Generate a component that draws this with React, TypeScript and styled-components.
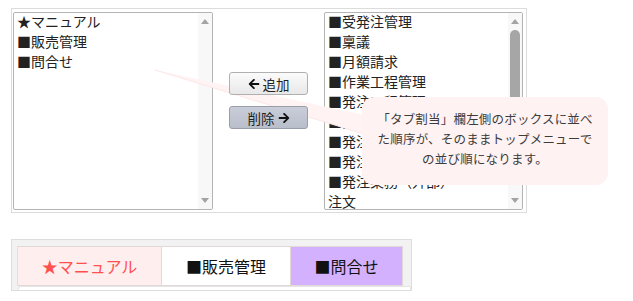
import React from 'react';
import styled, { createGlobalStyle } from 'styled-components';
import { FaArrowLeft, FaArrowRight } from 'react-icons/fa';

const GlobalStyle = createGlobalStyle`
  html, body {
    margin: 0;
    padding: 0;
    background: #fff;
  }
  body {
    font-family: 'Noto Sans CJK JP', 'Noto Sans', sans-serif;
    color: #222;
  }
  * {
    box-sizing: border-box;
  }
`;

const Page = styled.div`
  padding: 8px 0 0 11px;
  display: flex;
  flex-direction: column;
  gap: 26px;
`;

const Picker = styled.div`
  position: relative;
  width: 516px;
  height: 205px;
  padding: 3px 3px 1px 1px;
  border: 1px solid #dcdcdc;
  display: flex;
`;

const ListBox = styled.div<{ $width: number }>`
  width: ${({ $width }) => $width}px;
  height: 198px;
  border: 1px solid #b4b4b4;
  border-radius: 2px;
  background: #fff;
  display: flex;
  overflow: hidden;
`;

const Items = styled.ul`
  flex: 1;
  margin: -2px 0 0;
  padding: 0 0 0 3px;
  list-style: none;
  font-size: 14px;
  line-height: 20px;
  color: #222;
  white-space: nowrap;
  overflow: hidden;
`;

const Item = styled.li`
  height: 20px;
`;

const Scrollbar = styled.div`
  width: 14px;
  background: #f8f8f8;
  display: flex;
  flex-direction: column;
  align-items: center;
  padding: 6px 0 6px;
`;

const Arrow = styled.div<{ $down?: boolean }>`
  width: 0;
  height: 0;
  border-left: 4.5px solid transparent;
  border-right: 4.5px solid transparent;
  ${({ $down }) =>
    $down ? 'border-top: 5px solid #a3a3a3;' : 'border-bottom: 5px solid #a3a3a3;'}
`;

const Track = styled.div`
  flex: 1;
  width: 100%;
  display: flex;
  justify-content: center;
  padding: 6px 0;
`;

const Thumb = styled.div`
  width: 10px;
  height: 100px;
  border-radius: 5px;
  background: #a6a6a6;
`;

const Controls = styled.div`
  width: 111px;
  display: flex;
  flex-direction: column;
  align-items: center;
  padding-top: 60px;
  gap: 11px;
`;

const MoveButton = styled.button<{ $tone: 'add' | 'remove' }>`
  position: relative;
  z-index: 2;
  width: 79px;
  height: 23px;
  padding: 0;
  display: flex;
  align-items: center;
  justify-content: center;
  gap: 3px;
  font-family: inherit;
  font-size: 13.5px;
  color: #222;
  border-radius: 3px;
  border: 1px solid ${({ $tone }) => ($tone === 'add' ? '#b0b0b0' : '#9a9ea8')};
  background: ${({ $tone }) =>
    $tone === 'add'
      ? 'linear-gradient(#fbfbfb, #e8e8e8)'
      : 'linear-gradient(#c9cdd9, #b9becb)'};

  svg {
    width: 12px;
    height: 12px;
    color: #111;
  }
`;

const Bubble = styled.div`
  position: absolute;
  z-index: 3;
  left: 350px;
  top: 88px;
  width: 246px;
  height: 88px;
  padding: 12px 4px;
  border-radius: 12px;
  background: #fff2f2;
  color: #3c3c3c;
  font-size: 12.5px;
  letter-spacing: 0.2px;
  line-height: 20px;
  text-align: center;
`;

const Tail = styled.svg`
  position: absolute;
  z-index: 1;
  left: 0;
  top: 0;
  width: 400px;
  height: 160px;
  pointer-events: none;
  overflow: visible;
`;

const TabFrame = styled.div`
  width: 401px;
  height: 52px;
  border: 1px solid #dddddd;
  background: #f2f2f2;
  padding: 6px 0 0 5px;
  overflow: hidden;
`;

const TabRow = styled.div`
  display: flex;
  height: 40px;
`;

const tabTones = {
  pink: { bg: '#ffeeee', fg: '#ff4f4f' },
  plain: { bg: '#ffffff', fg: '#111' },
  lilac: { bg: '#d3b1ff', fg: '#111' },
};

const Tab = styled.div<{ $tone: keyof typeof tabTones; $width: number }>`
  width: ${({ $width }) => $width}px;
  display: flex;
  align-items: center;
  justify-content: center;
  font-size: 16px;
  border: 1px solid #e2d8d8;
  border-left: none;
  &:first-child {
    border-left: 1px solid #e6dede;
  }
  background: ${({ $tone }) => tabTones[$tone].bg};
  color: ${({ $tone }) => tabTones[$tone].fg};
`;

const TabPanel = styled.div`
  margin-left: 1px;
  height: 20px;
  background: #fff;
  border: 1px solid #e4e4e4;
  border-radius: 3px 0 0 0;
`;

const leftItems = ['★マニュアル', '■販売管理', '■問合せ'];
const rightItems = [
  '■受発注管理',
  '■稟議',
  '■月額請求',
  '■作業工程管理',
  '■発注工程管理',
  '■発注書作成',
  '■発注承認',
  '■発注先管理',
  '■発注業務（外部）',
  '注文',
];

const App = () => {
  return (
    <>
      <GlobalStyle />
      <Page>
        <Picker>
          <ListBox $width={200}>
            <Items>
              {leftItems.map((t) => (
                <Item key={t}>{t}</Item>
              ))}
            </Items>
            <Scrollbar>
              <Arrow />
              <Track />
              <Arrow $down />
            </Scrollbar>
          </ListBox>
          <Controls>
            <MoveButton $tone="add">
              <FaArrowLeft />
              追加
            </MoveButton>
            <MoveButton $tone="remove">
              削除
              <FaArrowRight />
            </MoveButton>
          </Controls>
          <ListBox $width={199}>
            <Items>
              {rightItems.map((t) => (
                <Item key={t}>{t}</Item>
              ))}
            </Items>
            <Scrollbar>
              <Arrow />
              <Track>
                <Thumb />
              </Track>
              <Arrow $down />
            </Scrollbar>
          </ListBox>
          <Tail>
            <polygon points="143,61 352,106 352,125" fill="#fff3f3" />
            <line x1="143" y1="61" x2="352" y2="125" stroke="#fde6e6" strokeWidth="1" />
          </Tail>
          <Bubble>
            「タブ割当」欄左側のボックスに並べ
            <br />
            た順序が、そのままトップメニューで
            <br />
            の並び順になります。
          </Bubble>
        </Picker>
        <TabFrame>
          <TabRow>
            <Tab $tone="pink" $width={145}>★マニュアル</Tab>
            <Tab $tone="plain" $width={129}>■販売管理</Tab>
            <Tab $tone="lilac" $width={112}>■問合せ</Tab>
          </TabRow>
          <TabPanel />
        </TabFrame>
      </Page>
    </>
  );
};

export default App;
